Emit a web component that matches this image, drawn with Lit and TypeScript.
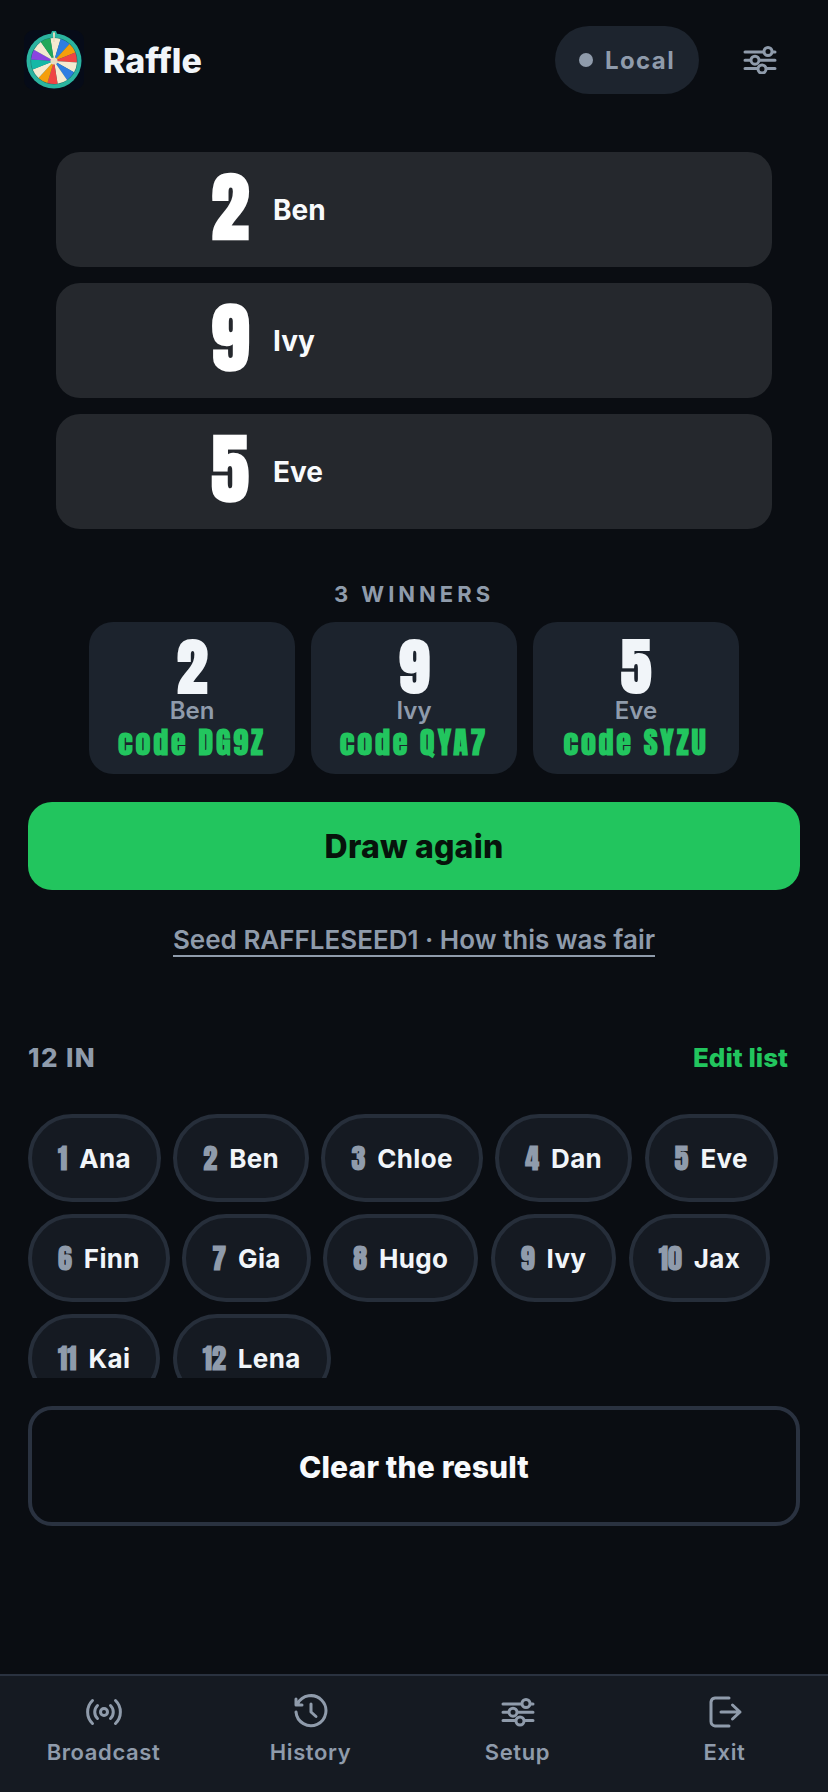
import { LitElement, html, css, svg } from "lit";
import { customElement } from "lit/decorators.js";

const sliders = svg`<path d="M2 6h30M2 14.200h30M2 22.500h30" stroke="currentColor" stroke-width="3" stroke-linecap="round" fill="none"/><g fill="var(--ib)" stroke="currentColor" stroke-width="3"><circle cx="25" cy="5.500" r="4"/><circle cx="12" cy="14.200" r="4"/><circle cx="19" cy="23" r="4"/></g>`;

const colors = ["#f5ead0","#2f7de1","#f59e0b","#ef4444","#f5ead0","#2f7de1","#f5ead0","#ef4444","#f59e0b","#f5ead0","#14b8a6","#8b45e0","#f5ead0","#22a85a"];

function wheel() {
  const n = colors.length;
  const cx = 30, cy = 31;
  const segs = colors.map((c, i) => {
    const a0 = ((i - 0.35) / n) * Math.PI * 2 - Math.PI / 2;
    const a1 = ((i + 0.65) / n) * Math.PI * 2 - Math.PI / 2;
    const r = 23;
    const d = `M${cx} ${cy}L${cx + r * Math.cos(a0)} ${cy + r * Math.sin(a0)}A${r} ${r} 0 0 1 ${cx + r * Math.cos(a1)} ${cy + r * Math.sin(a1)}Z`;
    return svg`<path d=${d} fill=${c}/>`;
  });
  return html`<svg class="logo" viewBox="0 0 60 60" width="60" height="60">
    <rect width="60" height="60" rx="10" fill="#060b18"/>
    <circle cx=${cx} cy=${cy} r="27.500" fill="#2bb3a0"/>
    <path d="M26.500 5 L28 1h4L33.500 5Z" fill="#2bb3a0"/>
    <circle cx=${cx} cy=${cy} r="23.500" fill="#17756d"/>
    ${segs}
    <path d="M29 2.500h2L30.700 12h-1.400Z" fill="#e8dcc0"/>
    <circle cx=${cx} cy=${cy} r="3.500" fill="#e8dcc0"/>
  </svg>`;
}

const results = [["2","Ben"],["9","Ivy"],["5","Eve"]];
const winners = [["2","Ben","code DG9Z"],["9","Ivy","code QYA7"],["5","Eve","code SYZU"]];
const names = ["Ana","Ben","Chloe","Dan","Eve","Finn","Gia","Hugo","Ivy","Jax","Kai","Lena"];

@customElement("app-root")
export class AppRoot extends LitElement {
  static styles = css`
    :host { display: block; width: 828px; height: 1792px; background: #0a0d12; color: #f1f5f9; font-family: Inter, "Liberation Sans", sans-serif; --ib: #0a0d12; --grey: #8f9bab; }
    * { box-sizing: border-box; }
    .page { height: 1792px; display: flex; flex-direction: column; }
    .num { font-family: Anton, Impact, "Liberation Sans Narrow", "Liberation Sans", sans-serif; font-weight: 700; }
    header { height: 120px; padding: 26px 28px 26px 24px; display: flex; align-items: center; flex: none; }
    .logo { flex: none; display: block; }
    .title { margin-left: 19px; font-size: 34px; font-weight: 800; flex: 1; }
    .pill { height: 68px; width: 144px; border-radius: 34px; background: #1d242e; display: flex; align-items: center; justify-content: center; gap: 12px; color: var(--grey); font-size: 24px; font-weight: 700; letter-spacing: 1.400px; }
    .dot { width: 14px; height: 14px; border-radius: 50%; background: var(--grey); }
    .gear { margin-left: 44px; color: var(--grey); width: 34px; height: 28px; display: block; margin-right: 23px; }
    .reels { margin: 32px 56px 0; display: flex; flex-direction: column; gap: 16px; }
    .reel { height: 115px; border-radius: 24px; background: #25282d; display: flex; align-items: center; padding-left: 155px; gap: 24px; }
    .reel .num { font-size: 76px; line-height: 1; color: #fff; width: 38px; display: flex; justify-content: center; margin-bottom: 5px; }
    .reel .nm { font-size: 28px; font-weight: 700; color: #f8fafc; }
    .wlabel { margin-top: 52px; text-align: center; font-size: 22px; font-weight: 700; letter-spacing: 4px; color: var(--grey); line-height: 26px; }
    .wins { margin-top: 15px; display: flex; justify-content: center; gap: 16px; }
    .win { width: 206px; height: 152px; border-radius: 24px; background: #1c232d; display: flex; flex-direction: column; align-items: center; padding-top: 14px; }
    .win .num { font-size: 62px; line-height: 62px; color: #f1f5f9; }
    .win .nm { font-size: 24px; line-height: 26px; font-weight: 600; color: var(--grey); }
    .win .cd { font-size: 30px; line-height: 38px; color: #22c55e; letter-spacing: 2.800px; }
    .draw { margin: 28px 28px 0; height: 88px; border-radius: 24px; background: #22c55e; color: #07130b; display: flex; align-items: center; justify-content: center; font-size: 32px; font-weight: 800; letter-spacing: 0.200px; }
    .seed { margin-top: 35px; display: flex; justify-content: center; }
    .seed span { font-size: 26px; line-height: 30px; font-weight: 600; color: var(--grey); border-bottom: 2px solid var(--grey); }
    .listhead { margin: 84px 28px 0; padding-right: 12px; display: flex; justify-content: space-between; align-items: center; font-size: 26px; font-weight: 800; height: 32px; }
    .listhead .l { color: var(--grey); letter-spacing: 1.400px; }
    .listhead .r { color: #22c55e; }
    .chipbox { margin: 41px 28px 0; height: 264px; overflow: hidden; display: flex; flex-wrap: wrap; gap: 12px 12.500px; align-content: flex-start; }
    .chip { height: 88px; border: 4px solid #262e3a; border-radius: 44px; background: #151a22; display: flex; align-items: center; padding: 0 26px; gap: 12px; font-size: 26px; font-weight: 700; letter-spacing: 0.300px; }
    .chip .num { font-size: 28px; color: var(--grey); letter-spacing: 0; }
    .clear { margin: 28px 28px 0; height: 120px; padding-top: 2px; border: 4px solid #2a3240; border-radius: 24px; display: flex; align-items: center; justify-content: center; font-size: 30px; font-weight: 800; letter-spacing: 0.150px; color: #f8fafc; }
    nav { margin-top: auto; height: 118px; flex: none; border-top: 2px solid #2a3240; background: #151a22; display: grid; grid-template-columns: repeat(4, 1fr); --ib: #151a22; }
    .tab { display: flex; flex-direction: column; align-items: center; color: var(--grey); padding-top: 18px; gap: 8px; font-size: 22px; font-weight: 600; letter-spacing: 0.600px; line-height: 28px; }
    .tab svg { width: 36px; height: 36px; display: block; }
  `;
  render() {
    return html`<div class="page">
      <header>
        ${wheel()}
        <div class="title">Raffle</div>
        <div class="pill"><span class="dot"></span>Local</div>
        <svg class="gear" viewBox="0 0 34 28">${sliders}</svg>
      </header>
      <div class="reels">
        ${results.map(([n, m]) => html`<div class="reel"><span class="num">${n}</span><span class="nm">${m}</span></div>`)}
      </div>
      <div class="wlabel">3 WINNERS</div>
      <div class="wins">
        ${winners.map(([n, m, c]) => html`<div class="win"><span class="num">${n}</span><span class="nm">${m}</span><span class="num cd">${c}</span></div>`)}
      </div>
      <div class="draw">Draw again</div>
      <div class="seed"><span>Seed RAFFLESEED1 · How this was fair</span></div>
      <div class="listhead"><span class="l">12 IN</span><span class="r">Edit list</span></div>
      <div class="chipbox">
        ${names.map((m, i) => html`<div class="chip"><span class="num">${i + 1}</span>${m}</div>`)}
      </div>
      <div class="clear">Clear the result</div>
      <nav>
        <div class="tab"><svg viewBox="0 0 36 36" fill="none" stroke="currentColor" stroke-width="3" stroke-linecap="round"><circle cx="18" cy="18" r="3.500"/><path d="M11.500 11.500a9 9 0 0 0 0 13M24.500 11.500a9 9 0 0 1 0 13M6.500 6.500a16 16 0 0 0 0 23M29.500 6.500a16 16 0 0 1 0 23"/></svg>Broadcast</div>
        <div class="tab"><svg viewBox="0 0 36 36" fill="none" stroke="currentColor" stroke-width="3" stroke-linecap="round" stroke-linejoin="round"><path d="M4.500 10A15 15 0 1 1 3 18M3 5v6h6"/><path d="M18 10v8l5 4.500"/></svg>History</div>
        <div class="tab"><svg viewBox="-1 -4 36 36">${sliders}</svg>Setup</div>
        <div class="tab"><svg viewBox="0 0 36 36" fill="none" stroke="currentColor" stroke-width="3" stroke-linecap="round" stroke-linejoin="round"><path d="M22 4H8a4.500 4.500 0 0 0-4 4v19.500a4.500 4.500 0 0 0 4 4.500h14M14 18h19M25.500 11l7.500 7-7.500 7"/></svg>Exit</div>
      </nav>
    </div>`;
  }
}
